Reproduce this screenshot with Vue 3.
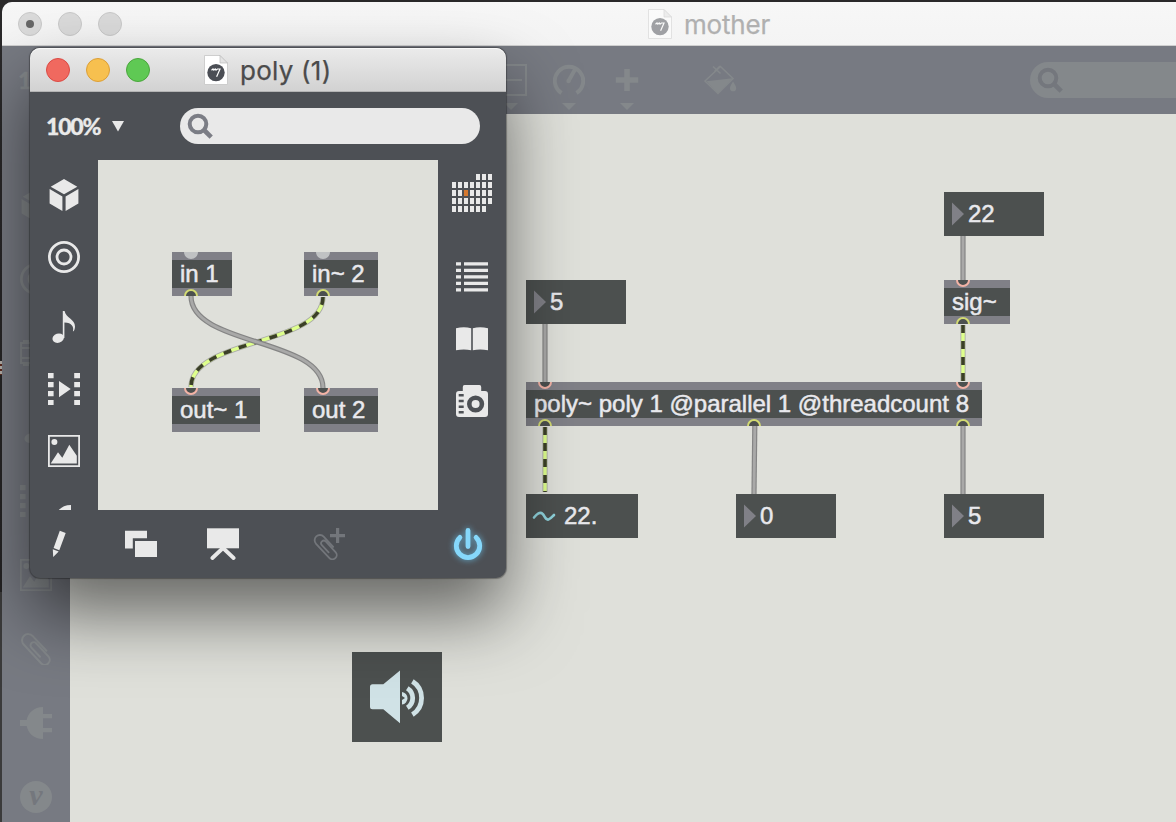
<script setup>
const sideIcons = ['cube', 'target', 'slider', 'note', 'film', 'picture', 'clip', 'plug', 'vizzie']
const childLeft = ['cube', 'target', 'note', 'film', 'picture', 'plug']

// Patcher objects, in canvas coordinates of their own window
const motherNodes = [
  { kind: 'number', text: '22', x: 874, y: 78, w: 100 },
  { kind: 'number', text: '5', x: 456, y: 166, w: 100 },
  { kind: 'object', text: 'sig~', x: 874, y: 166, w: 66, inlets: [19], outlets: [19] },
  { kind: 'object', text: 'poly~ poly 1 @parallel 1 @threadcount 8', x: 456, y: 268, w: 456, inlets: [19, 437], outlets: [19, 228, 437] },
  { kind: 'signal', text: '22.', x: 456, y: 380, w: 112 },
  { kind: 'number', text: '0', x: 666, y: 380, w: 100 },
  { kind: 'number', text: '5', x: 874, y: 380, w: 100 },
]
const motherCords = [
  { d: 'M893 122V166' },
  { d: 'M475 210V268' },
  { d: 'M684.8 312L684 380' },
  { d: 'M893 312V380' },
  { d: 'M893 211V267', signal: true },
  { d: 'M475 313V378', signal: true },
]
const polyNodes = [
  { kind: 'object', text: 'in 1', x: 74, y: 92, w: 60, bulbs: [19], outlets: [19] },
  { kind: 'object', text: 'in~ 2', x: 206, y: 92, w: 74, bulbs: [19], outlets: [19] },
  { kind: 'object', text: 'out~ 1', x: 74, y: 228, w: 88, inlets: [19] },
  { kind: 'object', text: 'out 2', x: 206, y: 228, w: 74, inlets: [19] },
]
const polyCords = [
  { d: 'M225 137C225 186 93 178 93 227', signal: true },
  { d: 'M93 136C93 186 225 178 225 228' },
]
const patches = { mother: { nodes: motherNodes, cords: motherCords }, poly: { nodes: polyNodes, cords: polyCords } }

const keys = []
for (let r = 0; r < 5; r++) {
  for (let c = 0; c < 7; c++) {
    if ((r === 0 && c < 4) || (r === 4 && c === 6)) continue
    keys.push({ x: c * 6, y: r * 8, on: r === 2 && c === 2 })
  }
}
const place = (n) => ({ left: n.x + 'px', top: n.y + 'px', width: n.w + 'px' })
</script>

<template>
  <div class="desktop">
    <svg class="defs" width="0" height="0">
      <symbol id="cube" viewBox="0 0 32 32"><path d="M16 0L29.3 7.7 16 15.3 2.7 7.7zM1.6 10L14.4 17.5V32L1.6 24.5zM17.6 17.5L30.4 10V24.5L17.6 32z" /></symbol>
      <symbol id="target" viewBox="0 0 32 32"><g fill="none" stroke="currentColor"><circle cx="16" cy="16" r="14.6" stroke-width="2.8" /><circle cx="16" cy="16" r="7" stroke-width="2.8" /></g></symbol>
      <symbol id="slider" viewBox="0 0 32 32"><path fill="none" stroke="currentColor" stroke-width="2" d="M1 6H31V26H1zM1 11H31M1 21H31M4 6V4H8V6M4 26V28H8V26" /></symbol>
      <symbol id="note" viewBox="0 0 32 32"><ellipse cx="10.2" cy="27.2" rx="5.8" ry="4.6" transform="rotate(-18 10.2 27.2)" /><path d="M14.8 0H16.6C17.5 7 27.2 8 27 15.5C27 18 26 20.5 24.9 20.5C26.2 16 24 11.5 16.4 11.4V27H14.8z" /></symbol>
      <symbol id="film" viewBox="0 0 32 32"><path d="M0 0h5.6v5.2H0zM0 9h5.6v5.2H0zM0 18h5.6v5.2H0zM0 27h5.6v5H0zM26.2 0h5.8v5.2h-5.8zM26.2 9h5.8v5.2h-5.8zM26.2 18h5.8v5.2h-5.8zM26.2 27h5.8v5h-5.8zM11 8L22.7 16 11 24.3z" /></symbol>
      <symbol id="picture" viewBox="0 0 32 32"><path fill="none" stroke="currentColor" stroke-width="1.8" d="M.9 .9H31.1V31.1H.9z" /><circle cx="6.4" cy="7" r="3" /><path d="M2.7 28.5L10 17.3 14.3 22.7 21.3 9.7 28.8 20.7V28.5z" /></symbol>
      <symbol id="clip" viewBox="0 0 32 32"><path fill="none" stroke="currentColor" stroke-width="2" stroke-linecap="round" transform="translate(16.6 16.6) rotate(-43)" d="M6.4 7.5V-12.5A6.2 6.2 0 0 0 -6 -12.5V13A5 5 0 0 0 4 13V-5A3.2 3.2 0 0 0 -2.4 -5V7.5" /></symbol>
      <symbol id="plug" viewBox="0 0 32 32"><path d="M0 13H6.7C8 6 14 0 23 0V7H32V11.3H23V21H32V25.3H23V32C14 32 8 26 6.7 19H0z" /></symbol>
      <symbol id="vizzie" viewBox="0 0 32 32"><circle cx="16" cy="16" r="16" /><text x="16" y="24" text-anchor="middle" class="vee">v</text></symbol>
      <symbol id="tri" viewBox="0 0 12 12"><path d="M0 0H12L6 10.5z" /></symbol>
      <symbol id="drop" viewBox="0 0 14 8"><path d="M0 0H14L7 7z" /></symbol>
      <symbol id="search" viewBox="0 0 28 28"><circle cx="11" cy="11" r="8.3" fill="none" stroke="currentColor" stroke-width="4" /><path d="M16.5 16.5L24.2 24.2" stroke="currentColor" stroke-width="4.6" /></symbol>
      <symbol id="doc" viewBox="0 0 24 30">
        <path d="M.5 .5H16L23.5 8V29.5H.5z" fill="#fff" stroke="#c9c9c9" stroke-width=".9" />
        <path d="M16 .5V8H23.5z" fill="#e4e4e4" stroke="#bbb" stroke-width=".7" />
        <circle cx="12" cy="17.6" r="8.7" fill="#4b4e55" />
        <path d="M7.5 15.3L9 14l.8 1.2L11.2 14l.8 1.2L13.4 14H16L12.6 21.8" fill="none" stroke="#fff" stroke-width="1.2" />
      </symbol>
    </svg>
    <i class="speck"></i>

    <section class="window mother">
      <header class="titlebar">
        <div class="lights"><b><i></i></b><b></b><b></b></div>
        <div class="title"><svg class="doc"><use href="#doc" /></svg><span>mother</span></div>
      </header>
      <div class="toolbar">
        <span class="zoom">100%</span>
        <div class="tools">
          <div class="tool">
            <svg width="32" height="32" viewBox="0 0 32 32"><path fill="none" stroke="currentColor" stroke-width="2" d="M1 1H31V31H1zM5 16H27" /></svg>
            <svg class="caret"><use href="#drop" /></svg>
          </div>
          <div class="tool">
            <svg width="32" height="32" viewBox="0 0 32 32"><path fill="none" stroke="currentColor" stroke-width="4" d="M8.5 29A14.2 14.2 0 1 1 23.5 29M15.5 17L22 5.5" /><circle cx="15.5" cy="17" r="2.2" /></svg>
            <svg class="caret"><use href="#drop" /></svg>
          </div>
          <div class="tool">
            <svg width="32" height="32" viewBox="0 0 32 32"><path d="M13.2 5h5.6v8.2h8.4v5.6h-8.4V27h-5.6v-8.2H4.8v-5.6h8.4z" /></svg>
            <svg class="caret"><use href="#drop" /></svg>
          </div>
          <div class="tool bucket">
            <svg width="34" height="32" viewBox="0 0 34 32"><path fill="none" stroke="currentColor" stroke-width="1.6" d="M2 17L17.5 2.5 30 14.5 15 29.5zM10 2.5L17.5 9.5M17 2L11.5 7.5" /><path d="M3.5 17.3L29.5 14.3 15 29.5z" /><path d="M30 17.5C31.5 20 33.2 22 33.2 24.2A3.1 3.1 0 0 1 27 24.2C27 22 28.6 20 30 17.5z" /></svg>
          </div>
        </div>
        <div class="search"><svg width="28" height="28"><use href="#search" /></svg></div>
      </div>
      <div class="body">
        <nav class="side"><svg v-for="n in sideIcons" :key="n" width="32" height="32"><use :href="'#' + n" /></svg></nav>
        <div class="canvas">
          <svg class="cords" width="1106" height="708">
            <g v-for="(c, i) in patches.mother.cords" :key="i" :class="c.signal ? 'sig' : 'msg'"><path class="a" :d="c.d" /><path class="b" :d="c.d" /><path class="c" :d="c.d" /></g>
          </svg>
          <div v-for="(n, i) in patches.mother.nodes" :key="i" class="node" :class="n.kind" :style="place(n)">
            <svg v-if="n.kind === 'number'" class="mark" width="12" height="24" viewBox="0 0 12 24"><path d="M0 .5L12 12 0 23.5z" /></svg>
            <svg v-if="n.kind === 'signal'" class="wave" width="24" height="14" viewBox="0 0 24 14"><path d="M2 8.5C5 5 8 2.5 10.5 4.8C13 7 13 11.3 16.5 10.5C18.5 10 20 8 22 6" /></svg>
            <span>{{ n.text }}</span>
            <svg v-if="n.kind === 'object'" class="ports" :width="n.w" height="44"><circle v-for="x in n.inlets" :key="'i' + x" :cx="x" cy="0" r="6" class="in" /><circle v-for="x in n.outlets" :key="'o' + x" :cx="x" cy="44" r="6" class="out" /></svg>
          </div>
          <div class="audio">
            <svg width="90" height="90" viewBox="0 0 90 90">
              <path d="M20.5 32.3H31.3L48 18.5V71.3L31.3 57.3H20.5Q18 57.3 18 54.8V34.8Q18 32.3 20.5 32.3z" />
              <path d="M50 40A6.3 6.3 0 0 1 50 52.5V48L53 46 50 44z" />
              <path fill="none" stroke="#d0e2e6" stroke-width="4.8" d="M55.3 36.2A11.6 11.6 0 0 1 55.3 55.8M60.4 29.4A19.6 19.6 0 0 1 60.4 62.6" />
            </svg>
          </div>
        </div>
      </div>
    </section>

    <section class="window child">
      <header class="titlebar">
        <div class="lights"><b class="red"></b><b class="yellow"></b><b class="green"></b></div>
        <div class="title"><svg class="doc"><use href="#doc" /></svg><span>poly (1)</span></div>
      </header>
      <div class="toolbar">
        <span class="zoom">100%</span><svg class="caret"><use href="#tri" /></svg>
        <div class="search"><svg width="28" height="28"><use href="#search" /></svg></div>
      </div>
      <div class="body">
        <nav class="side"><svg v-for="n in childLeft" :key="n" :class="'s-' + n" width="32" height="32"><use :href="'#' + n" /></svg></nav>
        <div class="canvas">
          <svg class="cords" width="340" height="350">
            <g v-for="(c, i) in patches.poly.cords" :key="i" :class="c.signal ? 'sig' : 'msg'"><path class="a" :d="c.d" /><path class="b" :d="c.d" /><path class="c" :d="c.d" /></g>
          </svg>
          <div v-for="(n, i) in patches.poly.nodes" :key="i" class="node" :class="n.kind" :style="place(n)">
            <span>{{ n.text }}</span>
            <svg class="ports" :width="n.w" height="44"><circle v-for="x in n.bulbs" :key="'b' + x" :cx="x" cy="0" r="7" class="bulb" /><circle v-for="x in n.inlets" :key="'i' + x" :cx="x" cy="0" r="6" class="in" /><circle v-for="x in n.outlets" :key="'o' + x" :cx="x" cy="44" r="6" class="out" /></svg>
          </div>
        </div>
        <nav class="right">
          <svg width="40" height="38" viewBox="0 0 40 38"><rect v-for="(k, i) in keys" :key="i" :x="k.x" :y="k.y" width="4" height="6" :class="{ hot: k.on }" /></svg>
          <svg class="list" width="32" height="30" viewBox="0 0 32 30"><path d="M0 .3h5v3.2H0zM8 .3h24v3.2H8zM0 6.8h5V10H0zM8 6.8h24V10H8zM0 13.3h5v3.2H0zM8 13.3h24v3.2H8zM0 19.8h5V23H0zM8 19.8h24V23H8zM0 26.2h5v3.3H0zM8 26.2h24v3.3H8z" /></svg>
          <svg class="book" width="32" height="24" viewBox="0 0 32 24"><path d="M0 1.3Q8 -.8 15.2 1.3V23.2Q8 21.8 0 23.2zM16.8 1.3Q24 -.8 32 1.3V23.2Q24 21.8 16.8 23.2z" /></svg>
          <svg class="camera" width="32" height="32" viewBox="0 0 32 32"><path d="M8.5 0H23.5Q25.2 0 25.2 2V6H29Q32 6 32 9V29Q32 32 29 32H3Q0 32 0 29V9Q0 6 3 6H6.8V2Q6.8 0 8.5 0z" /><circle cx="19.6" cy="19" r="6.3" fill="none" stroke="#4d5055" stroke-width="4.6" /><path fill="#4d5055" d="M2.7 9h5v2.6h-5zM2.7 14.7h5v2.6h-5zM2.7 20.4h5V23h-5zM2.7 26h5v2.6h-5z" /></svg>
        </nav>
      </div>
      <footer class="bottom">
        <svg width="32" height="32" viewBox="0 0 32 32"><path d="M16.8 2.8L22.7 5 16.3 22.2 10.6 20zM9.8 21.3L15.7 23.4 10.2 29z" /></svg>
        <svg class="layers" width="32" height="32" viewBox="0 0 32 32"><path d="M0 2.8H22V10.3H7.8V20.6H0zM10 13H32V29H10z" /></svg>
        <svg class="board" width="32" height="32" viewBox="0 0 32 32"><path d="M0 .3H32V20.3H0z" /><path d="M16 20L5.4 30M16 20L26.6 30" stroke="currentColor" stroke-width="3.8" stroke-linecap="round" /></svg>
        <svg class="attach" width="32" height="32" viewBox="0 0 32 32"><g transform="translate(13 18.8) rotate(-43) scale(.9)"><path fill="none" stroke="currentColor" stroke-width="2" stroke-linecap="round" d="M5.8 5.5V-10A5.8 5.8 0 0 0 -5.8 -10V11.5A4.8 4.8 0 0 0 3.8 11.5V-4.5A2.9 2.9 0 0 0 -2.1 -4.5V6.5" /></g><path d="M23 0h3.2v6h5.8v3.2h-5.8V15H23V9.2h-6V6h6z" /></svg>
        <svg class="power" width="44" height="44" viewBox="0 0 44 44"><path fill="none" stroke="currentColor" stroke-width="4.8" stroke-linecap="round" d="M13.9 15.4A11.7 11.7 0 1 0 30.1 15.4M22 8.5V24.5" /></svg>
      </footer>
    </section>
  </div>
</template>

<style>
html, body { margin: 0; overflow: hidden; background: #242324; }
</style>

<style scoped>
.desktop { position: relative; width: 1176px; height: 822px; overflow: hidden; background: linear-gradient(#2a292a 0, #242324 592px, #3b3b3b 592px); }
.defs { position: absolute; }
svg { fill: currentColor; flex: none; display: block; }
.speck { position: absolute; left: 0; top: 361px; width: 2px; height: 14px; background: repeating-linear-gradient(#b9b4ae 0 3px, #5d2a1e 3px 5px); }
.vee { font: italic bold 30px "Liberation Serif", serif; fill: #74777d; }

.window { position: absolute; display: flex; flex-direction: column; font-family: "Liberation Sans", Arial, sans-serif; }
.titlebar { position: relative; box-sizing: border-box; height: 44px; flex: none; display: flex; align-items: center; border-bottom: 1px solid #b4b4b4; }
.lights { display: flex; gap: 16px; padding-left: 16px; }
.lights b { box-sizing: border-box; width: 24px; height: 24px; border-radius: 50%; border: 1px solid #c8c8c8; background: #dadada; display: flex; align-items: center; justify-content: center; }
.lights i { width: 8px; height: 8px; border-radius: 50%; background: #666; }
.lights .red { background: #f0695f; border-color: #db4a44; }
.lights .yellow { background: #f7c04f; border-color: #dc9f37; }
.lights .green { background: #5fc954; border-color: #4aa63c; }
.title { display: flex; align-items: center; gap: 12px; font: 26px/32px Inter, Roboto, sans-serif; }
.title span { padding-top: 2px; -webkit-text-stroke: .25px currentColor; }
.doc { width: 24px; height: 30px; }
.toolbar { height: 68px; flex: none; display: flex; align-items: center; }
.zoom { font: 900 23px/30px Lato, sans-serif; letter-spacing: -1.2px; -webkit-text-stroke: .3px currentColor; }
.search { height: 36px; display: flex; align-items: center; box-sizing: border-box; padding: 2px 0 0 7px; }
.body { flex: 1; min-height: 0; display: flex; }
.side { width: 68px; flex: none; display: flex; flex-direction: column; align-items: center; overflow: hidden; }
.canvas { position: relative; flex: 1; background: #dfe0da; overflow: hidden; }

.mother { left: 2px; top: 2px; width: 1174px; height: 820px; border-radius: 10px 0 0 0; background: #777a82; color: #84888b; overflow: hidden; }
.mother .titlebar { background: linear-gradient(#f7f7f7, #f4f4f4); border-bottom: 1px solid #cfcfcf; }
.mother .lights { padding-top: 1px; }
.mother .title { margin-left: 526px; padding-top: 1px; color: #b0b0b0; }
.mother .title span { letter-spacing: -.2px; }
.mother .doc { opacity: .5; }
.mother .zoom { flex: none; box-sizing: border-box; width: 80px; padding-left: 16px; }
.tools { flex: none; display: flex; gap: 26px; margin-left: 413px; height: 68px; }
.tool { width: 32px; display: flex; flex-direction: column; align-items: center; padding-top: 18px; }
.tool .caret { width: 14px; height: 8px; margin-top: 7px; }
.tool.bucket { width: 34px; margin-left: 34px; }
.mother .search { flex: none; width: 200px; margin-left: 293px; border-radius: 18px; background: #84888b; color: #74777d; }
.mother .side { gap: 42px; padding-top: 75px; box-sizing: border-box; }

.child { left: 30px; top: 48px; width: 476px; height: 530px; border-radius: 10px; background: #4d5055; color: #e9e9e9; box-shadow: 0 0 1px 1px rgba(0,0,0,.3), 0 36px 70px rgba(0,0,0,.55); }
.child .titlebar { border-radius: 10px 10px 0 0; background: linear-gradient(#ebebeb, #d2d2d2); box-shadow: inset 0 1px #f8f8f8; }
.child .title { margin-left: 54px; color: #4b4b4b; }
.child .title span { letter-spacing: .25px; }
.child .zoom { margin-left: 16px; width: 66px; }
.child .toolbar .caret { width: 12px; height: 12px; margin-top: 2px; }
.child .search { width: 300px; margin-left: 56px; border-radius: 18px; background: #e9e9e9; color: #7b7d85; }
.child .side { gap: 30px; padding-top: 19px; box-sizing: border-box; height: 350px; }
.child .s-note { margin-top: 8px; }
.child .s-plug { margin-top: 8px; }
.right { width: 68px; flex: none; display: flex; flex-direction: column; align-items: center; padding-top: 14px; box-sizing: border-box; }
.hot { fill: #d4782f; }
.list { margin-top: 50px; }
.book { margin-top: 35px; }
.camera { margin-top: 34px; }
.bottom { height: 68px; flex: none; display: flex; align-items: center; padding-left: 13px; box-sizing: border-box; }
.layers { margin-left: 50px; }
.board { margin-left: 50px; }
.attach { margin-left: 74px; color: #73767b; }
.power { margin-left: 101px; color: #86d8fb; filter: drop-shadow(0 0 3px rgba(110,205,250,.75)); }

.cords { position: absolute; left: 0; top: 0; }
.cords path { fill: none; }
.msg .a { stroke: #858585; stroke-width: 5.2; }
.msg .b { stroke: #a9a9a8; stroke-width: 2.8; }
.sig .a { stroke: #acada8; stroke-width: 5.2; }
.sig .b { stroke: #deff8c; stroke-width: 3.4; }
.sig .c { stroke: #3b3f28; stroke-width: 3.6; stroke-dasharray: 8 8; }
.node { position: absolute; box-sizing: border-box; height: 44px; display: flex; align-items: center; padding-left: 8px; background: #4c504f; color: #e9e9ed; font-size: 24px; line-height: 28px; white-space: pre; -webkit-text-stroke: .5px #e9e9ed; }
.node.object { background: linear-gradient(#808087 8px, #4c504f 8px 36px, #808087 36px); }
.mark { color: #808087; margin-right: 4px; }
.wave { margin: 0 8px 0 -2px; }
.wave path { fill: none; stroke: #8fd3dc; stroke-width: 2.6; stroke-linecap: round; }
.ports { position: absolute; left: 0; top: 0; overflow: hidden; }
.ports circle { fill: #4c504f; stroke-width: 2; }
.ports .in { stroke: #f3b3a6; }
.ports .out { stroke: #d3db72; }
.ports .bulb { fill: #c0c2c3; }
.audio { position: absolute; left: 282px; top: 538px; width: 90px; height: 90px; background: #4c504f; color: #d0e2e6; }
</style>
